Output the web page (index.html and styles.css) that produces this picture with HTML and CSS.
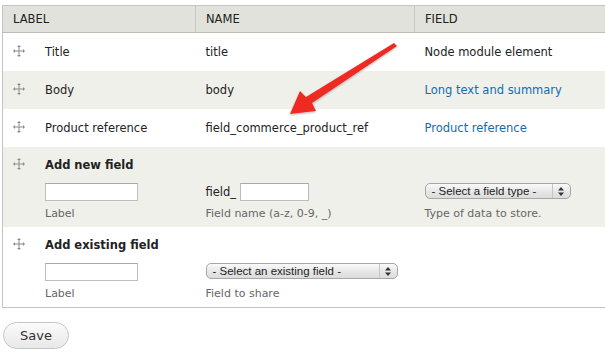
FILE: index.html
```html
<!DOCTYPE html>
<html lang="en">
<head>
    <meta charset="UTF-8">
    <meta name="viewport" content="width=device-width, initial-scale=1.0">
    <title>Manage fields</title>
    <link rel="stylesheet" href="styles.css">
</head>
<body>
    <div class="page">
        <table class="fields">
            <thead>
                <tr>
                    <th class="col-label">LABEL</th>
                    <th class="col-name">NAME</th>
                    <th class="col-field">FIELD</th>
                </tr>
            </thead>
            <tbody>
                <tr class="odd">
                    <td><span class="drag"><svg width="12" height="12" viewBox="0 0 12 12"><path d="M6 1v10M1 6h10" stroke="#8c8c8c" stroke-width="1"/><path d="M6 0l-2 2h4zM6 12l-2-2h4zM0 6l2-2v4zM12 6l-2-2v4z" fill="#8c8c8c"/></svg></span>Title</td>
                    <td>title</td>
                    <td>Node module element</td>
                </tr>
                <tr class="even">
                    <td><span class="drag"><svg width="12" height="12" viewBox="0 0 12 12"><path d="M6 1v10M1 6h10" stroke="#8c8c8c" stroke-width="1"/><path d="M6 0l-2 2h4zM6 12l-2-2h4zM0 6l2-2v4zM12 6l-2-2v4z" fill="#8c8c8c"/></svg></span>Body</td>
                    <td>body</td>
                    <td><a href="#">Long text and summary</a></td>
                </tr>
                <tr class="odd">
                    <td><span class="drag"><svg width="12" height="12" viewBox="0 0 12 12"><path d="M6 1v10M1 6h10" stroke="#8c8c8c" stroke-width="1"/><path d="M6 0l-2 2h4zM6 12l-2-2h4zM0 6l2-2v4zM12 6l-2-2v4z" fill="#8c8c8c"/></svg></span>Product reference</td>
                    <td>field_commerce_product_ref</td>
                    <td><a href="#">Product reference</a></td>
                </tr>
                <tr class="even add-row">
                    <td>
                        <div class="add-title"><span class="drag"><svg width="12" height="12" viewBox="0 0 12 12"><path d="M6 1v10M1 6h10" stroke="#8c8c8c" stroke-width="1"/><path d="M6 0l-2 2h4zM6 12l-2-2h4zM0 6l2-2v4zM12 6l-2-2v4z" fill="#8c8c8c"/></svg></span>Add new field</div>
                        <div class="add-input"><input type="text" class="text-input short"></div>
                        <div class="desc">Label</div>
                    </td>
                    <td>
                        <div class="add-title">&nbsp;</div>
                        <div class="add-input"><span class="prefix">field_</span><input type="text" class="text-input tiny"></div>
                        <div class="desc">Field name (a-z, 0-9, _)</div>
                    </td>
                    <td>
                        <div class="add-title">&nbsp;</div>
                        <div class="add-input"><div class="select type-select"><span class="select-text">- Select a field type -</span><span class="select-arrows"><svg width="6" height="9" viewBox="0 0 6 9"><path d="M3 0l3 3.5H0zM3 9L0 5.5h6z" fill="#333"/></svg></span></div></div>
                        <div class="desc">Type of data to store.</div>
                    </td>
                </tr>
                <tr class="odd add-row">
                    <td>
                        <div class="add-title"><span class="drag"><svg width="12" height="12" viewBox="0 0 12 12"><path d="M6 1v10M1 6h10" stroke="#8c8c8c" stroke-width="1"/><path d="M6 0l-2 2h4zM6 12l-2-2h4zM0 6l2-2v4zM12 6l-2-2v4z" fill="#8c8c8c"/></svg></span>Add existing field</div>
                        <div class="add-input"><input type="text" class="text-input short"></div>
                        <div class="desc">Label</div>
                    </td>
                    <td colspan="2">
                        <div class="add-title">&nbsp;</div>
                        <div class="add-input"><div class="select existing-select"><span class="select-text">- Select an existing field -</span><span class="select-arrows"><svg width="6" height="9" viewBox="0 0 6 9"><path d="M3 0l3 3.5H0zM3 9L0 5.5h6z" fill="#333"/></svg></span></div></div>
                        <div class="desc">Field to share</div>
                    </td>
                </tr>
            </tbody>
        </table>

        <div class="actions">
            <button type="button" class="save">Save</button>
        </div>

        <svg class="callout" width="120" height="80" viewBox="0 0 120 80">
            <defs>
                <filter id="shadow" x="-20%" y="-20%" width="140%" height="140%">
                    <feDropShadow dx="0" dy="1" stdDeviation="1" flood-color="#000" flood-opacity="0.3"/>
                </filter>
            </defs>
            <path d="M112 3 L115 6 L30 63 L34 71 L8 74 L18 51 L24 57 Z" fill="#ee2a22" filter="url(#shadow)"/>
        </svg>
    </div>
</body>
</html>
```

FILE: styles.css
```css
body {
    margin: 0;
    font-family: "DejaVu Sans", Verdana, sans-serif;
    font-size: 11.5px;
    color: #222;
    background: #fff;
    overflow: hidden;
}

.page {
    position: relative;
    padding: 5px 0 0 2px;
}

.fields {
    border-collapse: collapse;
    width: 603px;
    border-left: 1px solid #c4c4c0;
    border-bottom: 1px solid #c4c4c0;
}

.fields th {
    background-color: #e1e2dc;
    border-top: 1px solid #c4c4c0;
    border-bottom: 1px solid #bdbdb8;
    border-right: 1px solid #c8c8c3;
    text-align: left;
    font-weight: normal;
    color: #222;
    height: 26px;
    padding: 0 10px;
}

.fields th:last-child {
    border-right: none;
}

.col-label { width: 172px; }
.col-name { width: 198px; }

.fields td {
    padding: 0 10px;
    height: 38px;
    vertical-align: middle;
}

.fields tr.even td {
    background-color: #f0f0eb;
}

.fields a {
    color: #0d6db5;
    text-decoration: none;
}

.drag {
    display: inline-block;
    width: 32px;
    vertical-align: -1px;
}

.add-row td {
    vertical-align: top;
    padding-top: 11px;
    height: 69px;
}

.add-title {
    font-weight: bold;
    height: 17px;
}

.add-row .add-title .drag {
    font-weight: normal;
}

.add-input {
    margin-top: 8px;
    height: 18px;
}

.fields td:first-child .add-input,
.fields td:first-child .desc {
    padding-left: 32px;
}

.text-input {
    box-sizing: border-box;
    height: 18px;
    border: 1px solid #bdbdbd;
    border-top-color: #a9a9a9;
    background: #fff;
    margin: 0;
    padding: 0;
    vertical-align: middle;
}

.short { width: 93px; }
.tiny { width: 69px; }

.prefix {
    display: inline-block;
    margin-right: 4px;
    vertical-align: middle;
}

.desc {
    margin-top: 6px;
    font-size: 11px;
    color: #666;
}

.select {
    box-sizing: border-box;
    display: flex;
    align-items: center;
    height: 16px;
    border: 1px solid #a7a7a7;
    border-radius: 5px;
    background: linear-gradient(#fafafa, #e6e6e6 55%, #dcdcdc);
    font-family: "Liberation Sans", Arial, sans-serif;
    font-size: 11.5px;
    color: #222;
    margin-top: 1px;
}

.type-select { width: 146px; }
.existing-select { width: 192px; }

.select-text {
    flex: 1;
    padding-left: 6px;
}

.select-arrows {
    display: flex;
    align-items: center;
    justify-content: center;
    width: 17px;
    height: 100%;
    border-left: 1px solid #c6c6c6;
}

.actions {
    padding: 14px 0 0 1px;
}

.save {
    font-family: "DejaVu Sans", Verdana, sans-serif;
    font-size: 13px;
    color: #333;
    width: 66px;
    height: 27px;
    border: 1px solid #c6c6c6;
    border-radius: 14px;
    background: linear-gradient(#fbfbfb, #e8e8e8);
    cursor: pointer;
}

.callout {
    position: absolute;
    left: 282px;
    top: 40px;
}
```
